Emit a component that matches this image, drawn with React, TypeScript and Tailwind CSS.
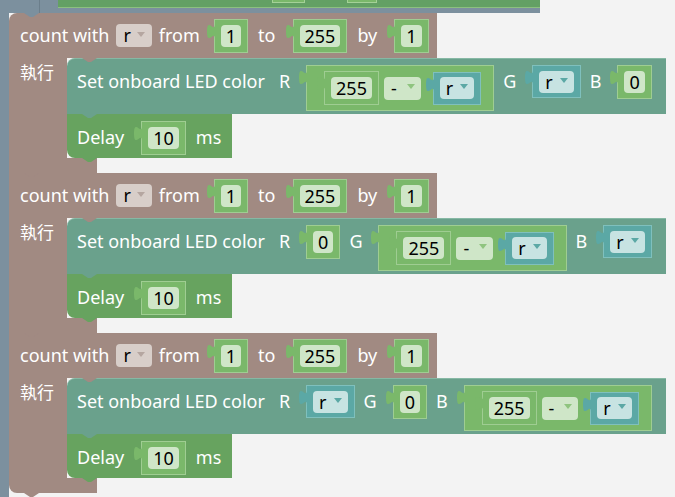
import type { ReactNode } from "react";

const label = "h-[33px] shrink-0 whitespace-nowrap text-[18px] leading-[33px] text-white";

// puzzle-piece output tab on the left of a value block
function Tab({ fill }: { fill: string }) {
  return (
    <svg width="8" height="16" viewBox="0 0 8 16" className="relative z-10 -mr-px mt-[5px] shrink-0 overflow-visible">
      <path d="M8 0C8 10 0 -8 0 7.5C0 23 8 5 8 15Z" fill={fill} />
    </svg>
  );
}

function Arrow({ fill }: { fill: string }) {
  return (
    <svg width="8" height="5" viewBox="0 0 8 5" className="mb-[3px] shrink-0">
      <path d="M0 0H8L4 5Z" fill={fill} />
    </svg>
  );
}

// previous/next connector notch
function Notch({ className }: { className: string }) {
  return (
    <span
      className={`pointer-events-none absolute z-20 h-[4px] w-[15px] [clip-path:polygon(0_0,100%_0,60%_100%,40%_100%)] ${className}`}
    />
  );
}

function Num({ v }: { v: string }) {
  return (
    <div className="flex shrink-0 items-start">
      <Tab fill="#7ab86a" />
      <div className="flex h-[34px] items-center border border-[#9fcd92] bg-[#7ab86a] px-[6px]">
        <span className="rounded-[4px] bg-[#cfe6c8] px-[5px] text-[18px] leading-[22px] text-black">{v}</span>
      </div>
    </div>
  );
}

function Var() {
  return (
    <div className="flex shrink-0 items-start">
      <Tab fill="#5ba8a5" />
      <div className="flex h-[33px] items-center border border-[#7fc0bd] bg-[#5ba8a5] px-[6px]">
        <div className="flex h-[22px] items-center gap-[7px] rounded-[4px] bg-[#c7e3e2] px-[6px] text-[18px] leading-[22px] text-black">
          r
          <Arrow fill="#5ba8a5" />
        </div>
      </div>
    </div>
  );
}

// 255 - r
function Minus() {
  return (
    <div className="flex shrink-0 items-start">
      <Tab fill="#7ab86a" />
      <div className="flex h-[46px] items-center gap-[5px] border border-[#9fcd92] bg-[#7ab86a] pl-[10px] pr-[12px]">
        <Num v="255" />
        <div className="flex h-[23px] items-center gap-[10px] rounded-[4px] bg-[#cfe6c8] pl-[7px] pr-[6px] text-[18px] leading-[23px] text-black">
          -
          <Arrow fill="#8fc47f" />
        </div>
        <Var />
      </div>
    </div>
  );
}

function Led({ r, g, b }: { r: ReactNode; g: ReactNode; b: ReactNode }) {
  return (
    <div className="relative flex h-[56px] w-[599px] items-start gap-[9px] rounded-tl-[8px] border-t border-[#86b8a4] bg-[#6aa18c] pl-[10px] pt-[6px]">
      <Notch className="left-[15px] -top-px bg-[#a18a82]" />
      <span className={label}>Set onboard LED color</span>
      <span className={`${label} ml-[5px]`}>R</span>
      {r}
      <span className={label}>G</span>
      {g}
      <span className={label}>B</span>
      {b}
      <Notch className="left-[15px] top-full bg-[#6aa18c]" />
    </div>
  );
}

function Delay() {
  return (
    <div className="relative flex h-[44px] w-[165px] items-start gap-[10px] rounded-bl-[8px] bg-[#67a35f] pl-[10px] pt-[7px]">
      <span className={label}>Delay</span>
      <Num v="10" />
      <span className={label}>ms</span>
      <Notch className="left-[15px] top-full bg-[#67a35f]" />
    </div>
  );
}

function Loop({ led, first, last }: { led: ReactNode; first?: boolean; last?: boolean }) {
  return (
    <div className="relative flex w-[657px] flex-col">
      <div
        className={`flex h-[45px] w-[428px] items-center gap-[7px] bg-[#a18a82] pl-[11px] ${first ? "rounded-tl-[8px]" : ""}`}
      >
        <span className={label}>count with</span>
        <div className="flex h-[23px] items-center gap-[6px] rounded-[4px] bg-[#d8cec9] px-[7px] text-[18px] leading-[23px] text-black">
          r
          <Arrow fill="#b5a6a0" />
        </div>
        <span className={label}>from</span>
        <Num v="1" />
        <span className={`${label} mx-[3px]`}>to</span>
        <Num v="255" />
        <span className={`${label} mx-[3px]`}>by</span>
        <Num v="1" />
      </div>
      <div className="flex">
        <div className="w-[58px] shrink-0 bg-[#a18a82] pl-[11px] pt-[4px] text-[17px] leading-[22px] text-white">執行</div>
        <div className="flex flex-col">
          {led}
          <Delay />
        </div>
      </div>
      <div className={`relative h-[15px] w-[88px] bg-[#a18a82] ${last ? "rounded-bl-[8px]" : ""}`}>
        <Notch className="left-[15px] top-full bg-[#a18a82]" />
      </div>
    </div>
  );
}

export default function App() {
  return (
    <div className="flex h-[497px] w-[675px] flex-col overflow-hidden bg-[#f3f3f3] font-['Noto_Sans','Noto_Sans_CJK_TC',sans-serif]">
      {/* tail of the enclosing block */}
      <div className="relative flex h-[13px] w-[540px] shrink-0 bg-[#7c909e]">
        <div className="h-full w-[40px] border-r border-[#6b7e8b]" />
        <div className="w-[18px]" />
        <div className="relative h-[8px] flex-1 border-b border-[#8cc07f] bg-[#63a064]">
          <div className="absolute left-[214px] top-0 h-[3px] w-[33px] border-x border-b border-[#a4d197] bg-[#7ab86a]" />
          <div className="absolute left-[289px] top-0 h-[3px] w-[30px] border-x border-b border-[#a4d197] bg-[#7ab86a]" />
        </div>
        <Notch className="left-[24px] top-full bg-[#7c909e]" />
      </div>
      <div className="flex flex-1">
        <div className="w-[9px] shrink-0 bg-[#7c909e]" />
        <div className="flex flex-col">
          <Loop first led={<Led r={<Minus />} g={<Var />} b={<Num v="0" />} />} />
          <Loop led={<Led r={<Num v="0" />} g={<Minus />} b={<Var />} />} />
          <Loop last led={<Led r={<Var />} g={<Num v="0" />} b={<Minus />} />} />
        </div>
      </div>
    </div>
  );
}
